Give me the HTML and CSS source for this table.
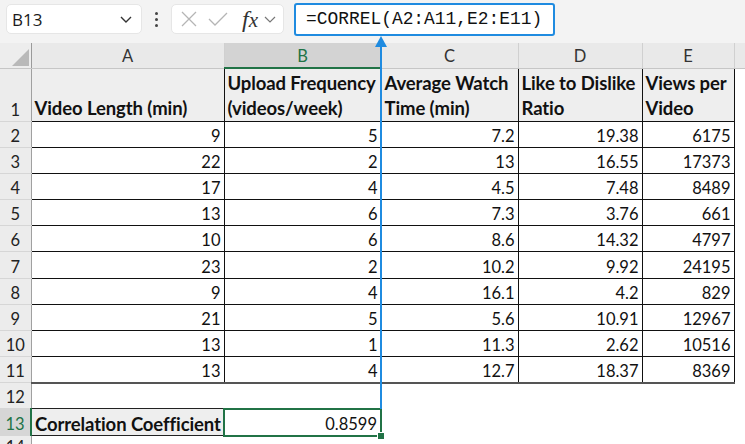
FILE: index.html
```html
<!DOCTYPE html>
<html>
<head>
<meta charset="utf-8">
<link rel="stylesheet" href="styles.css">
</head>
<body>
<div class="app">
  <div class="toolbar">
    <div class="namebox">
      <span class="name">B13</span>
      <svg class="chev" width="14" height="10" viewBox="0 0 14 10"><path d="M2 3 L7 8 L12 3" fill="none" stroke="#333" stroke-width="1.4"/></svg>
    </div>
    <div class="dots"><span></span><span></span><span></span></div>
    <div class="fxbox">
      <svg width="18" height="18" viewBox="0 0 18 18"><path d="M2 2 L16 16 M16 2 L2 16" stroke="#b5b5b5" stroke-width="1.3" fill="none"/></svg>
      <svg width="22" height="18" viewBox="0 0 22 18"><path d="M2 9 L8 15 L20 3" stroke="#b5b5b5" stroke-width="1.3" fill="none"/></svg>
      <span class="fx"><i>f</i><i class="x">x</i></span>
      <svg width="12" height="10" viewBox="0 0 12 10"><path d="M1 3 L6 8 L11 3" fill="none" stroke="#777" stroke-width="1.2"/></svg>
    </div>
    <div class="formula">=CORREL(A2:A11,E2:E11)</div>
  </div>
  <div class="sheet">
    <table class="grid">
      <colgroup>
        <col class="c-rh"><col class="c-a"><col class="c-b"><col class="c-c"><col class="c-d"><col class="c-e"><col class="c-f">
      </colgroup>
      <tr class="colhead">
        <th class="corner"><svg width="20" height="20" viewBox="0 0 20 20"><path d="M19 2 L19 19 L2 19 Z" fill="#b9b9b9"/></svg></th>
        <th>A</th><th class="sel">B</th><th>C</th><th>D</th><th>E</th><th class="blank"></th>
      </tr>
      <tr class="r1">
        <th class="rh">1</th>
        <td class="hd">Video Length (min)</td>
        <td class="hd">Upload Frequency (videos/week)</td>
        <td class="hd">Average Watch Time (min)</td>
        <td class="hd">Like to Dislike Ratio</td>
        <td class="hd">Views per Video</td>
        <td class="out"></td>
      </tr>
      <tr class="dr"><th class="rh">2</th><td>9</td><td>5</td><td>7.2</td><td>19.38</td><td>6175</td><td class="out"></td></tr>
      <tr class="dr"><th class="rh">3</th><td>22</td><td>2</td><td>13</td><td>16.55</td><td>17373</td><td class="out"></td></tr>
      <tr class="dr"><th class="rh">4</th><td>17</td><td>4</td><td>4.5</td><td>7.48</td><td>8489</td><td class="out"></td></tr>
      <tr class="dr"><th class="rh">5</th><td>13</td><td>6</td><td>7.3</td><td>3.76</td><td>661</td><td class="out"></td></tr>
      <tr class="dr"><th class="rh">6</th><td>10</td><td>6</td><td>8.6</td><td>14.32</td><td>4797</td><td class="out"></td></tr>
      <tr class="dr"><th class="rh">7</th><td>23</td><td>2</td><td>10.2</td><td>9.92</td><td>24195</td><td class="out"></td></tr>
      <tr class="dr"><th class="rh">8</th><td>9</td><td>4</td><td>16.1</td><td>4.2</td><td>829</td><td class="out"></td></tr>
      <tr class="dr"><th class="rh">9</th><td>21</td><td>5</td><td>5.6</td><td>10.91</td><td>12967</td><td class="out"></td></tr>
      <tr class="dr"><th class="rh">10</th><td>13</td><td>1</td><td>11.3</td><td>2.62</td><td>10516</td><td class="out"></td></tr>
      <tr class="dr last"><th class="rh">11</th><td>13</td><td>4</td><td>12.7</td><td>18.37</td><td>8369</td><td class="out"></td></tr>
      <tr class="r12"><th class="rh">12</th><td class="empty"></td><td class="empty"></td><td class="empty"></td><td class="empty"></td><td class="empty"></td><td class="out"></td></tr>
      <tr class="r13"><th class="rh selr">13</th><td class="label">Correlation Coefficient</td><td class="active">0.8599<span class="handle"></span></td><td class="empty"></td><td class="empty"></td><td class="empty"></td><td class="out"></td></tr>
      <tr class="r14"><th class="rh">14</th><td class="empty"></td><td class="empty"></td><td class="empty"></td><td class="empty"></td><td class="empty"></td><td class="out"></td></tr>
    </table>
    <div class="arrow">
      <svg width="12" height="12" viewBox="0 0 12 12"><path d="M6 0 L12 11 L0 11 Z" fill="#1f8be0"/></svg>
      <div class="shaft"></div>
    </div>
  </div>
</div>
</body>
</html>
```

FILE: styles.css
```css
html, body {
  margin: 0;
  padding: 0;
  background: #ffffff;
}
.app {
  width: 745px;
  height: 444px;
  overflow: hidden;
  position: relative;
  font-family: "Lato", "Liberation Sans", sans-serif;
}
.toolbar {
  height: 43px;
  background: #f3f3f3;
  display: flex;
  align-items: flex-start;
  padding: 3px 0 0 6px;
  box-sizing: border-box;
}
.namebox {
  width: 136px;
  height: 30px;
  margin-top: 1px;
  background: #fff;
  border: 1px solid #e6e6e6;
  border-radius: 5px;
  box-sizing: border-box;
  display: flex;
  align-items: center;
  justify-content: space-between;
  padding: 0 8px 0 5px;
}
.name {
  font-family: "Open Sans", "Liberation Sans", sans-serif;
  font-size: 17px;
  color: #1a1a1a;
}
.dots {
  width: 29px;
  height: 30px;
  display: flex;
  flex-direction: column;
  align-items: center;
  justify-content: center;
  gap: 3px;
  margin-top: 1px;
}
.dots span {
  width: 3px;
  height: 3px;
  border-radius: 50%;
  background: #444;
}
.fxbox {
  width: 113px;
  height: 30px;
  margin-top: 1px;
  background: #fff;
  border: 1px solid #e6e6e6;
  border-radius: 5px;
  box-sizing: border-box;
  display: flex;
  align-items: center;
  gap: 9px;
  padding: 0 5px 0 8px;
}
.fx {
  font-family: "Liberation Serif", serif;
  font-size: 24px;
  color: #333;
  margin-left: 4px;
  margin-right: -3px;
  line-height: 22px;
}
.fx .x { font-size: 21px; }
.formula {
  margin-left: 10px;
  width: 261px;
  height: 33px;
  border: 2px solid #1f8be0;
  border-radius: 3px;
  box-sizing: border-box;
  background: #fff;
  font-family: "Liberation Mono", monospace;
  font-size: 17.9px;
  line-height: 29px;
  padding-left: 10px;
  color: #111;
}
.sheet {
  position: relative;
}
.grid {
  border-collapse: collapse;
  table-layout: fixed;
  width: 745px;
}
.c-rh { width: 31px; }
.c-a { width: 193px; }
.c-b { width: 157px; }
.c-c { width: 137px; }
.c-d { width: 124px; }
.c-e { width: 92px; }
.c-f { width: 11px; }
.grid th, .grid td {
  padding: 0;
  overflow: hidden;
  white-space: nowrap;
}
.colhead { height: 25px; }
.colhead th {
  background: #e9e9e9;
  font-weight: normal;
  font-size: 16.5px;
  line-height: 20px;
  color: #333;
  border-right: 1px solid #d0d0d0;
  border-bottom: 1px solid #c6c6c6;
  text-align: center;
  padding-top: 1px;
}
.colhead th.corner {
  background: #ededed;
  text-align: right;
  vertical-align: bottom;
  border-right: 1px solid #9a9a9a;
  padding: 0 1px 1px 0;
  line-height: 0;
}
.colhead th.sel {
  background: #d3d3d3;
  color: #217346;
  border-bottom: 2px solid #217346;
}
.colhead th.blank {
  border-right: none;
}
.rh {
  background: #ececec;
  font-weight: normal;
  font-size: 16.5px;
  color: #222;
  text-align: center;
  vertical-align: bottom;
  border-right: 1px solid #a0a0a0;
  border-bottom: 1px solid #d6d6d6;
  line-height: 22px;
}
.rh.selr {
  background: #d6d6d6;
  color: #217346;
  border-right: 2px solid #217346;
}
.grid td {
  font-size: 16.5px;
  color: #111;
  text-align: right;
  padding-right: 3px;
  border: 1px solid #111;
  vertical-align: bottom;
  line-height: 22px;
}
.grid td.out {
  border: none;
  border-left: 1px solid #111;
  background: #fff;
}
.r1 { height: 53px; }
.r1 td.hd {
  white-space: normal;
  text-align: left;
  font-weight: bold;
  font-size: 18.5px;
  background: #eeeeee;
  padding-left: 3px;
  padding-right: 0;
  line-height: 25px;
  letter-spacing: -0.1px;
}
.r1 td.out { background: #fff; }
.dr { height: 26.2px; }
.last td { border-bottom: 2px solid #555; }
.last td.out { border-bottom: none; }
.r12 td.empty, .r13 td.empty, .r14 td.empty {
  border: none;
}
.r12 td.out, .r13 td.out, .r14 td.out { border-left: none; }
.r12 { height: 26px; }
.r13 { height: 27px; }
.r13 td.label {
  border: 1px solid #222;
  background: #eeeeee;
  text-align: left;
  font-weight: bold;
  font-size: 18.5px;
  padding-left: 3px;
  letter-spacing: -0.1px;
}
.r13 td.active {
  border: 2px solid #217346;
  position: relative;
  overflow: visible;
}
.handle {
  position: absolute;
  right: -5px;
  bottom: -5px;
  width: 6px;
  height: 6px;
  background: #217346;
  border: 1px solid #fff;
}
.r14 { height: 20px; }
.arrow {
  position: absolute;
  left: 375px;
  top: -7px;
  width: 12px;
  display: flex;
  flex-direction: column;
  align-items: center;
}
.arrow svg { display: block; }
.shaft {
  width: 2px;
  height: 362px;
  background: #1f8be0;
  margin-top: -1px;
}
```
